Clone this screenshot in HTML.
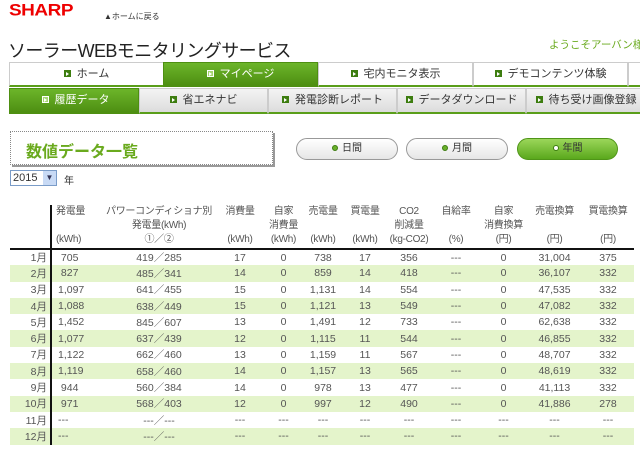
<!DOCTYPE html>
<html><head><meta charset="utf-8"><style>
*{margin:0;padding:0;box-sizing:border-box}
body{width:640px;height:457px;background:#fff;position:relative;overflow:hidden;font-family:"Liberation Sans","Noto Sans CJK JP",sans-serif;color:#333}
.a{position:absolute}
.tab{position:absolute;height:25px;border:1px solid #ccc;border-bottom:2px solid #5a9e1a;background:#fff;font-size:11px;text-align:center;line-height:22px;color:#333}
.tab.g{background:linear-gradient(#6cb52a,#4e8f12);color:#fff;border-color:#4e8f12}
.tab2{background:linear-gradient(#f4f4f4,#dcdcdc)}
.sq{display:inline-block;width:7px;height:7px;background:#3d7d10;border:1px solid #3d7d10;margin-right:6px;vertical-align:0px;position:relative}
.sq:after{content:"";position:absolute;left:1px;top:1px;width:0;height:0;border-left:3px solid #fff;border-top:2px solid transparent;border-bottom:2px solid transparent}
.g .sq{background:#a5d66f;border-color:#fff}
.btn{position:absolute;top:138px;height:22px;border:1px solid #999;border-radius:11px;background:linear-gradient(#fff,#e6e6e6);font-size:10px;text-align:center;line-height:20px;color:#333}
.btn.g{background:linear-gradient(#9bd65a,#5aa81c);border-color:#4f9518}
.dot{display:inline-block;width:6px;height:6px;border-radius:50%;background:#6ab02a;border:1px solid #3d7d10;margin-right:4px}
table{position:absolute;left:10px;top:205px;border-collapse:collapse;table-layout:fixed;width:624px;font-size:10.5px;font-family:"Liberation Sans","Noto Sans CJK JP",sans-serif;color:#555}
td,th{height:16.3px;text-align:center;font-weight:normal;padding:0;white-space:nowrap;overflow:hidden}
th{vertical-align:top;height:44px;line-height:14px;border-bottom:2px solid #111;font-size:10px;letter-spacing:-0.3px}
td.m,th.m{text-align:right;padding-right:3px;border-right:2px solid #111}
td.l{text-align:left;padding-left:6px}
tr.z td{background:#e4f4cb}
</style></head><body>
<div class="a" style="left:9px;top:2px;font-size:19px;font-weight:900;color:#e00;letter-spacing:-0.5px;font-family:'Liberation Sans',sans-serif;transform:scaleY(0.85);transform-origin:top left">SHARP</div>
<div class="a" style="left:104px;top:11px;font-size:8px;color:#333">&#9650;ホームに戻る</div>
<div class="a" style="left:8px;top:37px;font-size:18px;color:#222;letter-spacing:-0.6px">ソーラーWEBモニタリングサービス</div>
<div class="a" style="left:549px;top:37px;font-size:10.5px;color:#6aaa1e;white-space:nowrap">ようこそアーバン様</div>

<div class="tab" style="left:9px;top:62px;width:155px"><span class="sq"></span>ホーム</div>
<div class="tab g" style="left:163px;top:62px;width:155px"><span class="sq"></span>マイページ</div>
<div class="tab" style="left:318px;top:62px;width:155px"><span class="sq"></span>宅内モニタ表示</div>
<div class="tab" style="left:473px;top:62px;width:155px"><span class="sq"></span>デモコンテンツ体験</div>
<div class="tab" style="left:628px;top:62px;width:20px"></div>

<div class="tab g" style="left:9px;top:88px;width:130px;height:26px">&nbsp;<span class="sq"></span>履歴データ</div>
<div class="tab tab2" style="left:139px;top:88px;width:129px;height:26px"><span class="sq"></span>省エネナビ</div>
<div class="tab tab2" style="left:268px;top:88px;width:129px;height:26px"><span class="sq"></span>発電診断レポート</div>
<div class="tab tab2" style="left:397px;top:88px;width:129px;height:26px"><span class="sq"></span>データダウンロード</div>
<div class="tab tab2" style="left:526px;top:88px;width:120px;height:26px"><span class="sq"></span>待ち受け画像登録</div>

<div class="a" style="left:10px;top:131px;width:263px;height:34px;border:1px dotted #888;box-shadow:2px 2px 0 #999"></div>
<div class="a" style="left:26px;top:138px;font-size:16px;font-weight:bold;color:#6aaa1e">数値データ一覧</div>

<div class="btn" style="left:296px;width:102px"><span class="dot"></span>日間</div>
<div class="btn" style="left:406px;width:102px"><span class="dot"></span>月間</div>
<div class="btn g" style="left:517px;width:101px"><span class="dot" style="background:#fff"></span>年間</div>

<div class="a" style="left:10px;top:170px;width:47px;height:16px;border:1px solid #7a9cc8;font-size:11px;line-height:14px;padding-left:2px;background:#fff">2015<span style="position:absolute;right:0;top:0;width:13px;height:14px;background:#c8daf5;font-size:8px;text-align:center;color:#335">&#9660;</span></div>
<div class="a" style="left:64px;top:172px;font-size:10px">年</div>

<table>
<colgroup><col style="width:41px"><col style="width:52px"><col style="width:112px"><col style="width:50px"><col style="width:37px"><col style="width:42px"><col style="width:42px"><col style="width:46px"><col style="width:48px"><col style="width:47px"><col style="width:55px"><col style="width:52px"></colgroup>
<tr><th class="m"></th><th style="text-align:left;padding-left:4px">発電量<br><br>(kWh)</th><th>パワーコンディショナ別<br>発電量(kWh)<br>①／②</th><th>消費量<br><br>(kWh)</th><th>自家<br>消費量<br>(kWh)</th><th>売電量<br><br>(kWh)</th><th>買電量<br><br>(kWh)</th><th>CO2<br>削減量<br>(kg-CO2)</th><th>自給率<br><br>(%)</th><th>自家<br>消費換算<br>(円)</th><th>売電換算<br><br>(円)</th><th>買電換算<br><br>(円)</th></tr>
<tr><td class="m">1月</td><td class="l">&nbsp;705</td><td>419／285</td><td>17</td><td>0</td><td>738</td><td>17</td><td>356</td><td>---</td><td>0</td><td>31,004</td><td>375</td></tr>
<tr class="z"><td class="m">2月</td><td class="l">&nbsp;827</td><td>485／341</td><td>14</td><td>0</td><td>859</td><td>14</td><td>418</td><td>---</td><td>0</td><td>36,107</td><td>332</td></tr>
<tr><td class="m">3月</td><td class="l">1,097</td><td>641／455</td><td>15</td><td>0</td><td>1,131</td><td>14</td><td>554</td><td>---</td><td>0</td><td>47,535</td><td>332</td></tr>
<tr class="z"><td class="m">4月</td><td class="l">1,088</td><td>638／449</td><td>15</td><td>0</td><td>1,121</td><td>13</td><td>549</td><td>---</td><td>0</td><td>47,082</td><td>332</td></tr>
<tr><td class="m">5月</td><td class="l">1,452</td><td>845／607</td><td>13</td><td>0</td><td>1,491</td><td>12</td><td>733</td><td>---</td><td>0</td><td>62,638</td><td>332</td></tr>
<tr class="z"><td class="m">6月</td><td class="l">1,077</td><td>637／439</td><td>12</td><td>0</td><td>1,115</td><td>11</td><td>544</td><td>---</td><td>0</td><td>46,855</td><td>332</td></tr>
<tr><td class="m">7月</td><td class="l">1,122</td><td>662／460</td><td>13</td><td>0</td><td>1,159</td><td>11</td><td>567</td><td>---</td><td>0</td><td>48,707</td><td>332</td></tr>
<tr class="z"><td class="m">8月</td><td class="l">1,119</td><td>658／460</td><td>14</td><td>0</td><td>1,157</td><td>13</td><td>565</td><td>---</td><td>0</td><td>48,619</td><td>332</td></tr>
<tr><td class="m">9月</td><td class="l">&nbsp;944</td><td>560／384</td><td>14</td><td>0</td><td>978</td><td>13</td><td>477</td><td>---</td><td>0</td><td>41,113</td><td>332</td></tr>
<tr class="z"><td class="m">10月</td><td class="l">&nbsp;971</td><td>568／403</td><td>12</td><td>0</td><td>997</td><td>12</td><td>490</td><td>---</td><td>0</td><td>41,886</td><td>278</td></tr>
<tr><td class="m">11月</td><td class="l">---</td><td>---／---</td><td>---</td><td>---</td><td>---</td><td>---</td><td>---</td><td>---</td><td>---</td><td>---</td><td>---</td></tr>
<tr class="z"><td class="m">12月</td><td class="l">---</td><td>---／---</td><td>---</td><td>---</td><td>---</td><td>---</td><td>---</td><td>---</td><td>---</td><td>---</td><td>---</td></tr>
</table>
</body></html>
